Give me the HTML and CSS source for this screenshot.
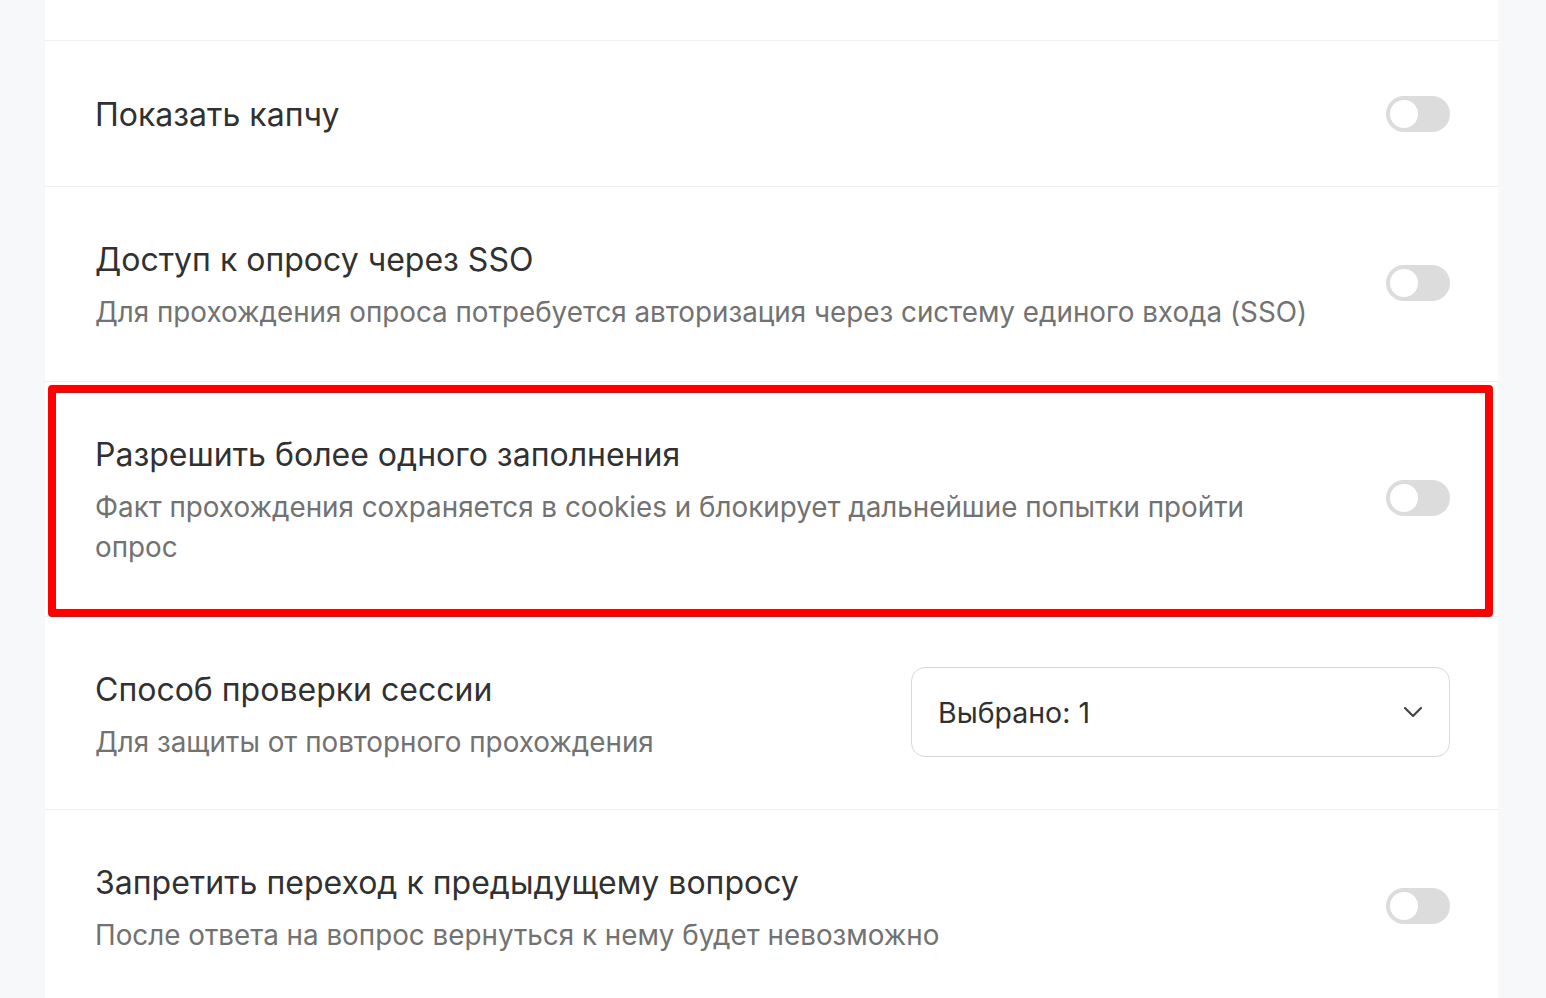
FILE: index.html
```html
<!DOCTYPE html>
<html lang="ru">
<head>
<meta charset="utf-8">
<title>Настройки опроса</title>
<link rel="stylesheet" href="styles.css">
</head>
<body>
<div class="page">
  <div class="card">
    <div class="row row-top"></div>

    <div class="row row-single">
      <div class="text">
        <div class="title">Показать капчу</div>
      </div>
      <span class="toggle"><span class="knob"></span></span>
    </div>

    <div class="row">
      <div class="text">
        <div class="title">Доступ к опросу через SSO</div>
        <div class="desc">Для прохождения опроса потребуется авторизация через систему единого входа (SSO)</div>
      </div>
      <span class="toggle"><span class="knob"></span></span>
    </div>

    <div class="row highlighted">
      <div class="text">
        <div class="title">Разрешить более одного заполнения</div>
        <div class="desc">Факт прохождения сохраняется в cookies и блокирует дальнейшие попытки пройти опрос</div>
      </div>
      <span class="toggle"><span class="knob"></span></span>
      <div class="mark"></div>
    </div>

    <div class="row row-select">
      <div class="text">
        <div class="title">Способ проверки сессии</div>
        <div class="desc">Для защиты от повторного прохождения</div>
      </div>
      <div class="select">
        <span class="select-value">Выбрано: 1</span>
        <svg class="chevron" width="20" height="12" viewBox="0 0 20 12"><path d="M2 2 L10 10 L18 2" fill="none" stroke="#444" stroke-width="2.2" stroke-linecap="round" stroke-linejoin="round"/></svg>
      </div>
    </div>

    <div class="row">
      <div class="text">
        <div class="title">Запретить переход к предыдущему вопросу</div>
        <div class="desc">После ответа на вопрос вернуться к нему будет невозможно</div>
      </div>
      <span class="toggle"><span class="knob"></span></span>
    </div>
  </div>
</div>
</body>
</html>
```

FILE: styles.css
```css
* { box-sizing: border-box; }
html, body { margin: 0; padding: 0; }
body {
  background: #f7f8fa;
  font-family: Inter, "Noto Sans", sans-serif;
  color: #333;
}
.page {
  padding: 0 48px 0 45px;
  height: 998px;
  overflow: hidden;
}
.card {
  background: #fff;
  min-height: 998px;
}
.row {
  position: relative;
  display: flex;
  align-items: center;
  gap: 64px;
  padding: 53px 48px 49px 50px;
  border-bottom: 1px solid #efefef;
}
.row-top {
  height: 41px;
  padding: 0;
}
.row-single {
  padding-top: 54px;
  padding-bottom: 51px;
}
.row-single .toggle {
  margin-bottom: 2px;
}
.row-select {
  align-items: flex-start;
  padding-top: 50px;
  padding-bottom: 47px;
}
.row-select .text {
  margin-top: 3px;
}
.text {
  flex: 1;
  min-width: 0;
  display: flex;
  flex-direction: column;
  gap: 12px;
}
.title {
  font-size: 32px;
  line-height: 40px;
  color: #313131;
}
.desc {
  font-size: 27.8px;
  line-height: 40px;
  color: #727272;
}
.toggle {
  flex: none;
  width: 64px;
  height: 36px;
  margin-bottom: 6px;
  border-radius: 18px;
  background: #dcdcdc;
  position: relative;
}
.knob {
  position: absolute;
  left: 4px;
  top: 4px;
  width: 28px;
  height: 28px;
  border-radius: 50%;
  background: #fff;
}
.mark {
  position: absolute;
  left: 3px;
  right: 5px;
  top: 3px;
  bottom: -1px;
  border: 8px solid #f00;
  border-radius: 4px;
  pointer-events: none;
}
.select {
  flex: none;
  width: 539px;
  height: 90px;
  border: 1.5px solid #d8d8d8;
  border-radius: 14px;
  display: flex;
  align-items: center;
  justify-content: space-between;
  padding: 0 26px 0 26px;
}
.select-value {
  font-size: 28.5px;
  color: #303030;
}
.chevron { display: block; }
```
